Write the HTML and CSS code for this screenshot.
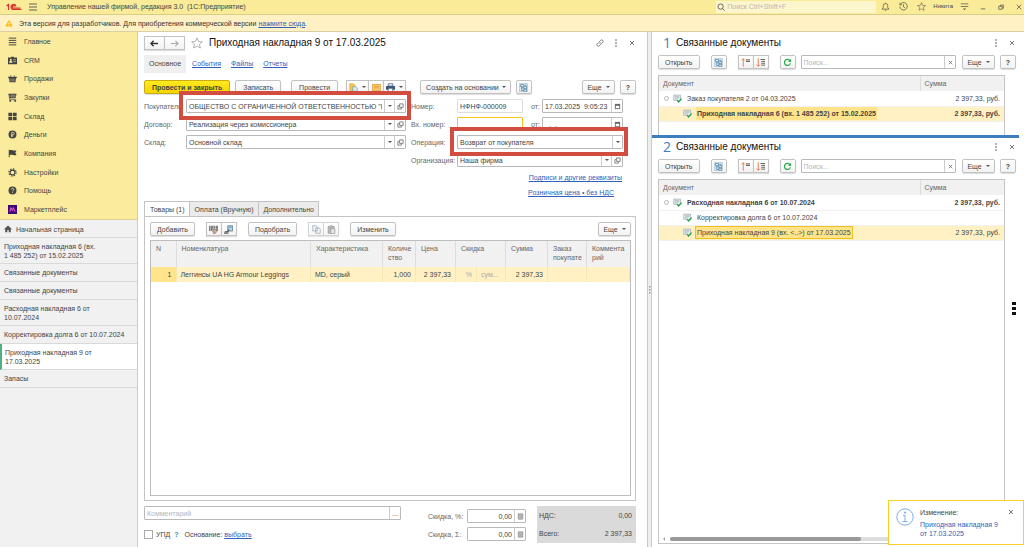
FILE: index.html
```html
<!DOCTYPE html>
<html lang="ru">
<head>
  <meta charset="UTF-8">
  <title>Управление нашей фирмой, редакция 3.0</title>
  <meta name="viewport" content="width=device-width, initial-scale=1.0">
  <link rel="stylesheet" href="styles.css">
</head>
<body>
  <!-- Shared icons -->
  <svg class="sprite" aria-hidden="true">
    <symbol id="i-star" viewBox="0 0 16 16"><path d="M8 1.2l2 4.8 5.2.4-4 3.3 1.3 5L8 12l-4.500 2.700 1.300-5-4-3.300L6 6z" fill="none" stroke="currentColor"/></symbol>
    <symbol id="i-kebab" viewBox="0 0 8 8"><circle cx="4" cy="1" r="0.800"/><circle cx="4" cy="4" r="0.800"/><circle cx="4" cy="7" r="0.800"/></symbol>
    <symbol id="i-close" viewBox="0 0 8 8"><path d="M2 2l4 4M6 2L2 6" stroke="currentColor" fill="none" stroke-width="0.800"/></symbol>
    <symbol id="i-open" viewBox="0 0 8 8"><path d="M3 1h4v4H3zM2.500 3H1v4h4V5.500" stroke="currentColor" fill="none" stroke-width="0.800"/></symbol>
    <symbol id="i-cal" viewBox="0 0 8 8"><path d="M1 1h6v6H1z" fill="#666"/><path d="M2 3.200h4v2.800H2z" fill="#fff"/></symbol>
    <symbol id="i-calc" viewBox="0 0 8 8"><path d="M1.500 1h5v6h-5z" fill="#ddd" stroke="#777" stroke-width="0.800"/><path d="M2 2.400h4M2.500 4.200h3M2.500 5.600h3" stroke="#777" stroke-width="0.700"/></symbol>
    <symbol id="i-struct" viewBox="0 0 12 12"><path d="M.5.500h11v11H.5z" fill="#dcebf5" stroke="#8bb0c9" stroke-width="0.700"/><path d="M2 2h4v2.500H2zM6.500 5h3.500v2.500H6.500zM6.500 8.500H10V11H6.500z" fill="#fff" stroke="#3f7396" stroke-width="0.900"/><path d="M3.500 4.500v5.500h3M3.500 6.500h3M7 3h2.500v2" stroke="#3f7396" fill="none" stroke-width="0.900"/></symbol>
    <symbol id="i-up" viewBox="0 0 12 12"><path d="M3 11.500V1M.8 3.200L3 1l2.200 2.200" stroke="#e8743c" fill="none" stroke-width="1.200"/><path d="M6.500 2.500H12M6.500 4.500H12" stroke="#555" stroke-width="1.300"/></symbol>
    <symbol id="i-down" viewBox="0 0 12 12"><path d="M3 .5V11M.8 8.800L3 11l2.200-2.200" stroke="#e8743c" fill="none" stroke-width="1.200"/><path d="M6 2h6M7 4.500h5M7 7h5M7 9.500h5" stroke="#555" stroke-width="1.200"/></symbol>
    <symbol id="i-refresh" viewBox="0 0 12 12"><path d="M9.800 7.200A4 4 0 1 1 9 3.300" stroke="#2ba84a" fill="none" stroke-width="1.700"/><path d="M10.800 1v4.200H6.800z" fill="#2ba84a"/></symbol>
    <symbol id="i-doc" viewBox="0 0 12 12"><path d="M1 1.500h9v7H1z" fill="#e9f1f5" stroke="#8a9aa5" stroke-width="0.800"/><path d="M2.500 3.500h6M2.500 5h6M2.500 6.500h4" stroke="#8a9aa5" stroke-width="0.700"/><path d="M5.500 8.500l2 2.200 4-4.500" stroke="#2ba84a" fill="none" stroke-width="1.800"/></symbol>
  </svg>

  <header class="topbar">
    <svg class="logo" viewBox="0 0 32 16" fill="none" stroke="#d8352a" stroke-width="2.400"><path d="M1 6l4-3v11M20 6.500A5 5 0 1 0 15 13h16M17.500 7A2.500 2.500 0 1 0 15 10.200h14"/></svg>
    <svg class="burger" viewBox="0 0 8 8"><path d="M0 1h8M0 4h8M0 7h8" stroke="#555" stroke-width="0.900"/></svg>
    <span class="app-name">Управление нашей фирмой, редакция 3.0 &nbsp;(1С:Предприятие)</span>
    <label class="search-top">
      <svg viewBox="0 0 10 10" fill="none" stroke="#444"><circle cx="4.500" cy="4.500" r="3.300"/><path d="M7 7l2.500 2.500"/></svg>
      <input type="search" placeholder="Поиск Ctrl+Shift+F" aria-label="Поиск">
    </label>
    <div class="top-icons">
      <svg viewBox="0 0 12 12" fill="none" stroke="currentColor"><path d="M1.500 9.500h9L9 7.500V5a3 3 0 0 0-6 0v2.500zM6 2V1M5 11h2"/></svg>
      <svg viewBox="0 0 12 12" fill="none" stroke="currentColor"><path d="M1.500 3.500A5 5 0 1 1 1 6M1.200 1v2.800H4M6 3v3.500l2 1"/></svg>
      <svg><use href="#i-star"/></svg>
      <span>Никита</span>
      <svg viewBox="0 0 12 12" fill="none" stroke="currentColor"><path d="M1 2.500h10M1 6h10"/><path d="M4 8.500h4L6 11z" fill="currentColor" stroke="none"/></svg>
    </div>
    <div class="win-icons">
      <svg viewBox="0 0 8 8" stroke="currentColor"><path d="M1 6.500h6"/></svg>
      <svg viewBox="0 0 8 8" stroke="currentColor" fill="none"><path d="M1 3h4.500v4H1zM3 3V1.500h4.500v4h-2"/></svg>
      <svg viewBox="0 0 8 8" stroke="currentColor"><path d="M1 1l6 6M7 1L1 7"/></svg>
    </div>
  </header>

  <div class="notice">
    <svg viewBox="0 0 10 10"><path d="M5 .8L9.700 9.500H.3z" fill="#fbbc12"/><path d="M5 4v3M5 7.600v1" stroke="#fff"/></svg>
    <span>Эта версия для разработчиков. Для приобретения коммерческой версии <a href="#">нажмите сюда</a>.</span>
  </div>

  <div class="workspace">
    <aside class="sidebar">
      <nav class="menu">
        <a href="#"><svg viewBox="0 0 12 12"><path d="M1 1.500h10M1 4.500h10M1 7.500h10M1 10.500h10" stroke="currentColor" stroke-width="1.300"/></svg>Главное</a>
        <a href="#"><svg viewBox="0 0 12 12"><path d="M0 2h4V1h4v1h4v9H0z"/><path d="M2 8.500c0-3 3.500-3 3.500 0zM7 5h3.500M7 7.500h3.500" fill="#faec9c" stroke="#faec9c" stroke-width="0.800"/><circle cx="3.700" cy="5" r="1.200" fill="#faec9c"/></svg>CRM</a>
        <a href="#"><svg viewBox="0 0 12 12"><path d="M1 5h10l-1 6H2zM0 3.500h12V5H0z"/><path d="M3 4l1-2.500M9 4L8 1.500" stroke="currentColor" stroke-width="0.800"/><path d="M2 7h8M2 9h8" stroke="#faec9c" stroke-width="0.500"/></svg>Продажи</a>
        <a href="#"><svg viewBox="0 0 12 12"><path d="M1 1h10.500L10 7H2.500z"/><path d="M1 1l1.500 8H11M5 1v6M8 1v6" stroke="currentColor" fill="none"/><path d="M5 1.500V7M8 1.500V7M2 4h9" stroke="#faec9c" stroke-width="0.500"/><circle cx="3" cy="10.500" r="1.300"/><circle cx="9.500" cy="10.500" r="1.300"/></svg>Закупки</a>
        <a href="#"><svg viewBox="0 0 12 12"><path d="M.5 1h5v4.500h-5zM6.500 1h5v4.500h-5zM.5 6.500h5V11h-5zM6.500 6.500h5V11h-5z"/></svg>Склад</a>
        <a href="#"><svg viewBox="0 0 12 12"><circle cx="6" cy="6" r="5.300"/><path d="M5 9.500V3h1.500a1.700 1.700 0 0 1 0 3.500H4M4 8h3" stroke="#faec9c" fill="none"/></svg>Деньги</a>
        <a href="#"><svg viewBox="0 0 12 12"><path d="M1 1h1.300v10H1zM2.300 1.500c3-1 4 1.500 9 .3l-1.500 3L11.300 8c-4 1-6-1.500-9 0z"/></svg>Компания</a>
        <a href="#"><svg viewBox="0 0 12 12" fill="none" stroke="currentColor"><circle cx="6" cy="6" r="3.200" stroke-width="1.500"/><circle cx="6" cy="6" r="4.800" stroke-width="1.600" stroke-dasharray="1.900 1.870"/></svg>Настройки</a>
        <a href="#"><svg viewBox="0 0 12 12"><circle cx="6" cy="6" r="5.300"/><path d="M4.300 4.800c0-2.300 3.500-2.300 3.500-.2C7.800 6 6 5.800 6 7.300M6 8.300v1.200" stroke="#faec9c" fill="none" stroke-width="1.100"/></svg>Помощь</a>
        <a href="#"><svg viewBox="0 0 12 12"><path d="M0 0h12v12H0z" fill="#3c0a78"/><path d="M2.500 9l1.200-5.500L6 7.500l1-4 2.500 5.500" stroke="#ef5fd0" fill="none" stroke-width="1.300"/></svg>Маркетплейс</a>
      </nav>
      <div class="windows">
        <a class="home" href="#"><svg viewBox="0 0 12 12"><path d="M6 .8L0 6.500h1.800V11H5V7.500h2V11h3.200V6.500H12z"/></svg>Начальная страница</a>
        <a href="#">Приходная накладная 6 (вх.<br>1 485 252) от 15.02.2025</a>
        <a href="#">Связанные документы</a>
        <a href="#">Связанные документы</a>
        <a href="#">Расходная накладная 6 от<br>10.07.2024</a>
        <a href="#">Корректировка долга 6 от 10.07.2024</a>
        <a class="active" href="#">Приходная накладная 9 от<br>17.03.2025</a>
        <a href="#">Запасы</a>
      </div>
    </aside>

    <main class="document">
      <div class="doc-head">
        <div class="btn-group">
          <button class="btn" aria-label="Назад"><svg viewBox="0 0 10 8"><path d="M4 1L1 4l3 3M1 4h8" stroke="#333" stroke-width="1.500" fill="none"/></svg></button>
          <button class="btn" aria-label="Вперед"><svg viewBox="0 0 10 8"><path d="M6 1l3 3-3 3M9 4H1" stroke="#aaa" stroke-width="1.200" fill="none"/></svg></button>
        </div>
        <svg class="fav"><use href="#i-star"/></svg>
        <h1>Приходная накладная 9 от 17.03.2025</h1>
        <div class="head-tools">
          <svg viewBox="0 0 10 10" fill="none" stroke="currentColor"><path d="M4.200 5.800a1.900 1.900 0 0 1 0-2.600l1.700-1.700a1.850 1.850 0 0 1 2.600 2.600L7.300 5.300M5.800 4.200a1.900 1.900 0 0 1 0 2.600L4.100 8.500a1.850 1.850 0 0 1-2.600-2.600L2.700 4.700" stroke-width="0.900"/></svg>
          <svg><use href="#i-kebab"/></svg>
          <svg><use href="#i-close"/></svg>
        </div>
      </div>

      <nav class="sections">
        <a class="current" href="#">Основное</a>
        <a href="#">События</a>
        <a href="#">Файлы</a>
        <a href="#">Отчеты</a>
      </nav>

      <div class="commands">
        <button class="btn primary">Провести и закрыть</button>
        <button class="btn">Записать</button>
        <button class="btn post">Провести</button>
        <div class="btn-group icons">
          <button class="btn" aria-label="Файлы"><svg viewBox="0 0 12 12"><path d="M1 1h5l2 2v7H1z" fill="#f4c64e" stroke="#cf9a22" stroke-width="0.700"/><path d="M5 5h4l2 2v4H5z" fill="#dcebf5" stroke="#5a8dad" stroke-width="0.800"/></svg><i class="caret"></i></button>
          <button class="btn" aria-label="Письмо"><svg viewBox="0 0 12 12"><path d="M.5 2h11v8.500H.5z" fill="#f7cf72" stroke="#d9962b"/><path d="M2.500 4.500h7M2.500 6.500h7" stroke="#d9962b"/></svg></button>
          <button class="btn" aria-label="Печать"><svg viewBox="0 0 12 12"><path d="M0 4h12v5H0z" fill="#3d5a75"/><path d="M3 1h6v3H3zM3 7h6v4.500H3z" fill="#fff" stroke="#3d5a75"/></svg><i class="caret"></i></button>
        </div>
        <button class="btn base">Создать на основании<i class="caret"></i></button>
        <button class="btn square" aria-label="Структура подчиненности"><svg><use href="#i-struct"/></svg></button>
        <button class="btn more">Еще<i class="caret"></i></button>
        <button class="btn square help">?</button>
      </div>

      <form class="props">
        <div class="props-left">
          <div class="field">
            <label for="buyer">Покупатель:</label>
            <div class="combo marked"><select id="buyer"><option>ОБЩЕСТВО С ОГРАНИЧЕННОЙ ОТВЕТСТВЕННОСТЬЮ "Б</option></select><span class="drop"><i class="caret"></i></span><button type="button" aria-label="Открыть"><svg><use href="#i-open"/></svg></button></div>
          </div>
          <div class="field">
            <label for="contract">Договор:</label>
            <div class="combo"><select id="contract"><option>Реализация через комиссионера</option></select><span class="drop"><i class="caret"></i></span><button type="button" aria-label="Открыть"><svg><use href="#i-open"/></svg></button></div>
          </div>
          <div class="field">
            <label for="store">Склад:</label>
            <div class="combo"><select id="store"><option>Основной склад</option></select><span class="drop"><i class="caret"></i></span><button type="button" aria-label="Открыть"><svg><use href="#i-open"/></svg></button></div>
          </div>
        </div>
        <div class="props-right">
          <div class="field">
            <label for="num">Номер:</label>
            <div class="combo number readonly"><input id="num" type="text" value="НФНФ-000009" readonly></div>
            <label class="from" for="date">от:</label>
            <div class="combo"><input id="date" type="text" value="17.03.2025  9:05:23"><button type="button" aria-label="Календарь"><svg><use href="#i-cal"/></svg></button></div>
          </div>
          <div class="field">
            <label for="innum">Вх. номер:</label>
            <div class="combo number focused"><input id="innum" type="text"></div>
            <label class="from" for="indate">от:</label>
            <div class="combo"><input id="indate" type="text" value="  .  ."><button type="button" aria-label="Календарь"><svg><use href="#i-cal"/></svg></button></div>
          </div>
          <div class="field">
            <label for="oper">Операция:</label>
            <div class="combo marked"><select id="oper"><option>Возврат от покупателя</option></select><span class="drop"><i class="caret"></i></span></div>
          </div>
          <div class="field">
            <label for="org">Организация:</label>
            <div class="combo"><select id="org"><option>Наша фирма</option></select><span class="drop"><i class="caret"></i></span><button type="button" aria-label="Открыть"><svg><use href="#i-open"/></svg></button></div>
          </div>
          <div class="extra-links">
            <a href="#">Подписи и другие реквизиты</a>
            <a class="price" href="#">Розничная цена • без НДС</a>
          </div>
        </div>
      </form>

      <div class="tabs" role="tablist">
        <button class="tab selected" role="tab">Товары (1)</button>
        <button class="tab" role="tab">Оплата (Вручную)</button>
        <button class="tab" role="tab">Дополнительно</button>
      </div>
      <section class="tab-body">
        <div class="toolbar">
          <button class="btn">Добавить</button>
          <div class="btn-group">
            <button class="btn" aria-label="Штрихкод"><svg viewBox="0 0 12 12"><path d="M1 1v7M3 1v7M5 1v5M7 1v4M9.500 1v4M11 1v7" stroke="#444" stroke-width="1.200"/><path d="M5 6h5v3l-2 2.500H6.500L5 9z" fill="#d9a98a" stroke="#555" stroke-width="0.700"/></svg></button>
            <button class="btn" aria-label="Весы"><svg viewBox="0 0 12 12"><path d="M5 1h6.500v7H5z" fill="#b9d8ea" stroke="#46708c"/><path d="M6.500 3h3.500" stroke="#46708c"/><path d="M1 9h4l2-3" stroke="#444" stroke-width="1.500" fill="none"/><path d="M0 10h6v1.500H0z" fill="#444"/></svg></button>
          </div>
          <button class="btn">Подобрать</button>
          <div class="btn-group dim">
            <button class="btn" aria-label="Копировать"><svg viewBox="0 0 12 12"><path d="M1 1h4.500L7 2.500V8H1zM5 4h4.500L11 5.500V11H5z" fill="#eef4f8" stroke="#68869c"/></svg></button>
            <button class="btn" aria-label="Вставить"><svg viewBox="0 0 12 12" stroke="#777"><path d="M1.500 2h8v9h-8z" fill="#999"/><path d="M4 1h3v2H4z" fill="#ccc"/><path d="M5 5h5.500v6.500H5z" fill="#ddd"/></svg></button>
          </div>
          <button class="btn">Изменить</button>
          <button class="btn more">Еще<i class="caret"></i></button>
        </div>
        <div class="grid-box">
          <table class="goods">
            <colgroup><col class="c-n"><col><col class="c-char"><col class="c-qty"><col class="c-price"><col class="c-pct"><col class="c-disc"><col class="c-sum"><col class="c-order"><col class="c-note"></colgroup>
            <thead>
              <tr><th>N</th><th>Номенклатура</th><th>Характеристика</th><th>Количе<br>ство</th><th>Цена</th><th colspan="2">Скидка</th><th>Сумма</th><th>Заказ<br>покупате</th><th>Коммента<br>рий</th></tr>
            </thead>
            <tbody>
              <tr><td class="num cell-current">1</td><td>Леггинсы UA HG Armour Leggings</td><td>MD, серый</td><td class="num">1,000</td><td class="num">2 397,33</td><td class="num hint">%</td><td class="hint">сум...</td><td class="num">2 397,33</td><td></td><td></td></tr>
            </tbody>
          </table>
        </div>
      </section>

      <footer class="doc-foot">
        <div class="foot-left">
          <div class="combo comment"><input type="text" placeholder="Комментарий" aria-label="Комментарий"><button type="button">...</button></div>
          <div class="basis">
            <input type="checkbox" id="upd"><label for="upd">УПД</label><b class="q">?</b><span>Основание: <a href="#">выбрать</a></span>
          </div>
        </div>
        <div class="discounts">
          <div class="field"><label for="dp">Скидка, %:</label><div class="combo"><input id="dp" type="text" value="0,00"><button type="button" aria-label="Калькулятор"><svg><use href="#i-calc"/></svg></button></div></div>
          <div class="field"><label for="ds">Скидка, Σ:</label><div class="combo"><input id="ds" type="text" value="0,00"><button type="button" aria-label="Калькулятор"><svg><use href="#i-calc"/></svg></button></div></div>
        </div>
        <dl class="totals">
          <div><dt>НДС:</dt><dd>0,00</dd></div>
          <div><dt>Всего:</dt><dd>2 397,33</dd></div>
        </dl>
      </footer>
    </main>

    <div class="splitter"><svg viewBox="0 0 2 8" fill="#888"><path d="M0 0h1.500v1.500H0zM0 3h1.500v1.500H0zM0 6h1.500v1.500H0z"/></svg></div>

    <div class="related">
      <section class="rel-panel first">
        <div class="rel-head">
          <span class="mark">1</span>
          <h2>Связанные документы</h2>
          <svg><use href="#i-kebab"/></svg>
          <svg><use href="#i-close"/></svg>
        </div>
        <div class="rel-tools">
          <button class="btn">Открыть</button>
          <button class="btn square" aria-label="Структура"><svg><use href="#i-struct"/></svg></button>
          <div class="btn-group"><button class="btn" aria-label="Вверх"><svg><use href="#i-up"/></svg></button><button class="btn" aria-label="Вниз"><svg><use href="#i-down"/></svg></button></div>
          <button class="btn square" aria-label="Обновить"><svg><use href="#i-refresh"/></svg></button>
          <div class="combo find"><input type="text" placeholder="Поиск..." aria-label="Поиск"><button type="button" aria-label="Очистить"><svg><use href="#i-close"/></svg></button></div>
          <button class="btn more">Еще<i class="caret"></i></button>
          <button class="btn square help">?</button>
        </div>
        <div class="rel-box">
          <table>
            <thead><tr><th>Документ</th><th class="c-amount">Сумма</th></tr></thead>
            <tbody>
              <tr><td><div class="node"><i class="toggle"></i><svg><use href="#i-doc"/></svg><span>Заказ покупателя 2 от 04.03.2025</span></div></td><td class="num">2 397,33, руб.</td></tr>
              <tr class="strong current"><td><div class="node child"><svg><use href="#i-doc"/></svg><span>Приходная накладная 6 (вх. 1 485 252) от 15.02.2025</span></div></td><td class="num">2 397,33, руб.</td></tr>
            </tbody>
          </table>
        </div>
      </section>

      <section class="rel-panel second">
        <div class="rel-head">
          <span class="mark">2</span>
          <h2>Связанные документы</h2>
          <svg><use href="#i-kebab"/></svg>
          <svg><use href="#i-close"/></svg>
        </div>
        <div class="rel-tools">
          <button class="btn">Открыть</button>
          <button class="btn square" aria-label="Структура"><svg><use href="#i-struct"/></svg></button>
          <div class="btn-group"><button class="btn" aria-label="Вверх"><svg><use href="#i-up"/></svg></button><button class="btn" aria-label="Вниз"><svg><use href="#i-down"/></svg></button></div>
          <button class="btn square" aria-label="Обновить"><svg><use href="#i-refresh"/></svg></button>
          <div class="combo find"><input type="text" placeholder="Поиск..." aria-label="Поиск"><button type="button" aria-label="Очистить"><svg><use href="#i-close"/></svg></button></div>
          <button class="btn more">Еще<i class="caret"></i></button>
          <button class="btn square help">?</button>
        </div>
        <div class="rel-box">
          <table>
            <thead><tr><th>Документ</th><th class="c-amount">Сумма</th></tr></thead>
            <tbody>
              <tr class="strong"><td><div class="node"><i class="toggle"></i><svg><use href="#i-doc"/></svg><span>Расходная накладная 6 от 10.07.2024</span></div></td><td class="num">2 397,33, руб.</td></tr>
              <tr><td><div class="node child"><svg><use href="#i-doc"/></svg><span>Корректировка долга 6 от 10.07.2024</span></div></td><td></td></tr>
              <tr class="current focus"><td><div class="node child"><svg><use href="#i-doc"/></svg><span>Приходная накладная 9 (вх. &lt;..&gt;) от 17.03.2025</span></div></td><td class="num">2 397,33, руб.</td></tr>
            </tbody>
          </table>
          <div class="hscroll"><i class="arrow"></i><div class="track"><div class="thumb"></div></div></div>
        </div>
      </section>
      <svg class="side-dots" viewBox="0 0 4 14"><path d="M0 0h4v3H0zM0 5h4v3H0zM0 10h4v3H0z"/></svg>
    </div>
  </div>

  <div class="toast">
    <svg class="info" viewBox="0 0 18 18" fill="none" stroke="#7db0e6"><circle cx="9" cy="9" r="8.200"/><path d="M7 7.500h2v6M6.500 13.500h5M8.500 4h1.200v1.200H8.500z"/></svg>
    <div class="toast-text">
      <p>Изменение:</p>
      <a href="#">Приходная накладная 9<br>от 17.03.2025</a>
    </div>
    <svg class="x"><use href="#i-close"/></svg>
  </div>
</body>
</html>
```

FILE: styles.css
```css
/* Base */
* {
  box-sizing: border-box;
  margin: 0;
  padding: 0;
}
body {
  display: flex;
  flex-direction: column;
  height: 100vh;
  overflow: hidden;
  font-family: "Liberation Sans", Arial, sans-serif;
  font-size: 7px;
  line-height: 9px;
  color: #444;
  background: #fff;
}
button, input, select {
  font: inherit;
  color: inherit;
  background: none;
  border: 0;
  outline: 0;
  border-radius: 0;
  min-width: 0;
}
select {
  appearance: none;
}
input[type="search"] {
  appearance: none;
}
input::placeholder {
  color: #b5b5b5;
  opacity: 1;
}
svg {
  width: 8px;
  height: 8px;
  flex: none;
  fill: currentColor;
  color: #555;
}
svg[fill="none"] {
  fill: none;
}
a {
  color: #2f62b8;
}
table {
  border-collapse: collapse;
  width: 100%;
}
.sprite {
  display: none;
}
.caret {
  flex: none;
  border: 2px solid transparent;
  border-top-color: #555;
  border-bottom: 0;
}

/* Top bar */
.topbar {
  display: flex;
  align-items: center;
  height: 15px;
  padding: 0 2px 1px 6px;
  background: #faeb98;
  border-bottom: 1px solid #d8cd86;
}
.logo {
  width: 16px;
}
.burger {
  margin: 0 10px 0 7px;
}
.app-name {
  flex: 1;
}
.search-top {
  display: flex;
  align-items: center;
  gap: 2px;
  width: 160px;
  height: 12px;
  padding: 0 1px;
  background: #fdf5cb;
}
.search-top input {
  flex: 1;
}
.top-icons, .win-icons {
  display: flex;
  align-items: center;
}
.top-icons {
  gap: 9px;
  margin: 0 11px 0 5px;
  font-size: 6px;
}
.top-icons svg {
  width: 9px;
  height: 9px;
}
.top-icons span {
  margin: 0 -2px;
}
.win-icons {
  gap: 12px;
}
.win-icons svg {
  width: 6px;
  height: 6px;
}

/* Developer notice */
.notice {
  display: flex;
  align-items: center;
  gap: 6px;
  height: 17px;
  padding-left: 5px;
  background: #fff1c3;
  border-bottom: 1px solid #d9cfa4;
  color: #333;
}

/* Layout */
.workspace {
  display: flex;
  flex: 1;
  min-height: 0;
}
.sidebar {
  flex: 0 0 138px;
  background: #f1f1f1;
  border-right: 1px solid #d9cf96;
}
.menu {
  display: flex;
  flex-direction: column;
  height: 188px;
  background: #faec9c;
  border-bottom: 1px solid #d9cf96;
}
.menu a {
  display: flex;
  flex: 1;
  align-items: center;
  gap: 7px;
  padding-left: 8px;
  color: #444;
  text-decoration: none;
}
.menu svg {
  width: 9px;
  height: 9px;
  color: #444;
}
.windows a {
  display: block;
  min-height: 18px;
  padding: 4px 4px 3px;
  border-bottom: 1px solid #d9d9d9;
  color: #444;
  text-decoration: none;
}
.windows .home {
  display: flex;
  align-items: center;
  gap: 4px;
}
.windows .active {
  padding-left: 3px;
  background: #fff;
  border-left: 2px solid #4eb183;
}

/* Buttons */
.btn {
  display: inline-flex;
  align-items: center;
  justify-content: center;
  gap: 4px;
  flex: none;
  height: 14px;
  padding: 0 7px;
  border: 1px solid #c2c2c2;
  border-radius: 2px;
  background: linear-gradient(#fff, #f2f2f2);
  box-shadow: 0 1px 1px #ddd;
  white-space: nowrap;
}
.btn svg {
  width: 9px;
  height: 9px;
}
.square {
  width: 16px;
  padding: 0;
}
.help {
  font-weight: bold;
}
.more {
  width: 33px;
  padding: 0;
}
.primary {
  font-weight: bold;
  background: linear-gradient(#ffea1f, #f5d400);
  border-color: #c9ab12;
}
.btn-group {
  display: flex;
  flex: none;
}
.btn-group .btn {
  min-width: 16px;
  padding: 0 2px;
  border-radius: 0;
}
.btn-group .btn + .btn {
  margin-left: -1px;
}

/* Document form */
.document {
  display: flex;
  flex-direction: column;
  flex: 1;
  min-width: 0;
  padding: 4px 11px 2px 6px;
}
.doc-head {
  display: flex;
  align-items: center;
  height: 14px;
}
.doc-head .btn {
  width: 21px;
}
.fav {
  width: 12px;
  height: 12px;
  margin: 0 6px;
  color: #999;
}
h1, h2 {
  font-size: 10px;
  font-weight: normal;
  line-height: 14px;
  color: #111;
}
.doc-head h1 {
  flex: 1;
}
.head-tools {
  display: flex;
  gap: 8px;
}
.sections {
  display: flex;
  gap: 10px;
  margin: 5px 0 7px;
  line-height: 18px;
}
.sections .current {
  padding: 0 5px;
  margin-right: -4px;
  background: #efefef;
  color: #444;
  text-decoration: none;
}
.commands {
  display: flex;
  gap: 5px;
  margin-bottom: 5px;
}
.post {
  margin-left: 5px;
}
.icons {
  margin: 0 9px 0 3px;
}
.commands .base {
  gap: 3px;
  padding: 0 4px 0 5px;
}
.commands .more, .toolbar .more {
  margin-left: auto;
}

/* Fields */
.props {
  display: flex;
  align-items: flex-start;
  gap: 5px;
  padding-right: 13px;
}
.props-left {
  flex: 1;
}
.props-right {
  flex: 0 0 212px;
}
.field {
  display: flex;
  align-items: center;
  height: 18px;
  padding-bottom: 4px;
}
.field label {
  flex: none;
  color: #666;
  white-space: nowrap;
}
.props-left label {
  width: 42px;
}
.props-right label {
  width: 46px;
}
.props-right .from {
  width: 19px;
  padding-left: 8px;
}
.combo {
  position: relative;
  display: flex;
  flex: 1;
  min-width: 0;
  height: 14px;
  border: 1px solid #b9b9b9;
  border-radius: 1px;
  background: #fff;
}
.combo input, .combo select {
  flex: 1;
  width: 0;
  padding: 0 2px;
  white-space: pre;
}
.combo button, .drop {
  display: flex;
  align-items: center;
  justify-content: center;
  flex: 0 0 11px;
  border-left: 1px solid #ccc;
}
.combo .drop {
  flex-basis: 10px;
}
.combo svg {
  width: 7px;
  height: 7px;
}
.number {
  flex: 0 0 66px;
}
.readonly {
  border-color: #ddd;
}
.focused {
  border-color: #f5c518;
}
/* Red frame over the fields that need attention */
.marked::after {
  content: "";
  position: absolute;
  inset: -9px -6px -8px -8px;
  z-index: 2;
  border: 4px solid #d24d40;
  pointer-events: none;
}
.extra-links {
  display: flex;
  flex-direction: column;
  align-items: flex-end;
  gap: 6px;
  padding: 2px 1px 0 0;
}
.price {
  margin-right: 8px;
}

/* Tabs */
.tabs {
  display: flex;
  margin-top: 4px;
}
.tab {
  height: 15px;
  padding: 0 4px 0 5px;
  border: 1px solid #c4c4c4;
  border-left-width: 0;
  border-bottom: 0;
  background: #ebebeb;
}
.tab.selected {
  border-left-width: 1px;
  background: #fff;
  margin-bottom: -1px;
  z-index: 1;
}
.tab-body {
  display: flex;
  flex-direction: column;
  flex: 1;
  padding: 5px 4px 4px 5px;
  border: 1px solid #c4c4c4;
}
.toolbar {
  display: flex;
  gap: 11px;
  margin-bottom: 4px;
}
.toolbar .btn, .rel-tools .btn {
  padding: 0 6px;
}
.toolbar .btn-group .btn, .rel-tools .btn-group .btn, .rel-tools .square {
  padding: 0 2px;
}
.toolbar .more, .rel-tools .more {
  padding: 0;
}
.dim {
  opacity: 0.7;
}
.grid-box {
  flex: 1;
  border: 1px solid #bdbdbd;
}
.goods {
  table-layout: fixed;
}
th {
  font-weight: normal;
  text-align: left;
  color: #666;
  background: #f1f1f1;
  border-right: 1px solid #ddd;
}
th:last-child {
  border-right: 0;
}
.goods th {
  height: 26px;
  padding: 3px 0 0 5px;
  vertical-align: top;
}
.goods td {
  height: 15px;
  padding: 0 4px;
  background: #fff1c3;
  border-right: 1px solid #f7e7b2;
  white-space: nowrap;
}
.c-n { width: 25px; }
.c-char { width: 72px; }
.c-qty { width: 33px; }
.c-price { width: 40px; }
.c-pct { width: 21px; }
.c-disc { width: 29px; }
.c-sum { width: 42px; }
.c-order { width: 39px; }
.c-note { width: 43px; }
.num {
  text-align: right;
}
.goods .cell-current {
  background: #ffe48c;
}
.goods .hint {
  color: #aaa;
}

/* Document footer */
.doc-foot {
  display: flex;
  align-items: flex-start;
  justify-content: space-between;
  padding-top: 5px;
}
.foot-left {
  flex: 0 0 257px;
}
.comment {
  margin-bottom: 10px;
}
.basis {
  display: flex;
  align-items: center;
}
.basis input {
  appearance: none;
  width: 9px;
  height: 9px;
  margin-right: 3px;
  border: 1px solid #aaa;
}
.q {
  margin: 0 6px 0 4px;
  color: #2c8fd0;
}
.discounts {
  flex: 0 0 98px;
  margin-left: 16px;
  padding-top: 3px;
}
.discounts label {
  width: 39px;
}
.discounts input {
  text-align: right;
}
.totals {
  flex: 0 0 99px;
  padding: 1px 4px 0 2px;
  background: #dadada;
}
.totals div {
  display: flex;
  justify-content: space-between;
  line-height: 18px;
}

/* Splitter */
.splitter {
  display: flex;
  align-items: center;
  justify-content: center;
  flex: 0 0 5px;
  border: 1px solid #c8c8c8;
  border-width: 0 1px;
  background: #eee;
}
.splitter svg {
  width: 2px;
  color: #999;
}

/* Related documents */
.related {
  position: relative;
  display: flex;
  flex-direction: column;
  flex: 0 0 372px;
}
.rel-panel {
  display: flex;
  flex-direction: column;
  padding: 4px 8px 0 6px;
}
.first {
  height: 104px;
}
.second {
  flex: 1;
  padding-bottom: 3px;
  position: relative;
}
.second::before {
  content: "";
  position: absolute;
  inset: -1px 5px auto 0;
  height: 3px;
  background: #3e7ebf;
}
.rel-head {
  display: flex;
  align-items: center;
  height: 14px;
}
.rel-head h2 {
  flex: 1;
}
.rel-head svg {
  margin-left: 8px;
}
.mark {
  width: 18px;
  padding-left: 5px;
  font-family: "Open Sans", sans-serif;
  font-size: 14px;
  line-height: 14px;
  color: #3e7ebf;
}
.rel-tools {
  display: flex;
  gap: 11px;
  margin: 5px 0 6px;
}
.rel-tools .find {
  height: 14px;
  margin: 0 -5px 0 -6px;
}
.rel-tools .help {
  margin-left: -6px;
}
.rel-box {
  display: flex;
  flex-direction: column;
  justify-content: space-between;
  flex: 1;
  margin-right: 11px;
  border: 1px solid #c4c4c4;
}
.first .rel-box {
  border-bottom: 0;
}
.rel-box th {
  height: 15px;
  padding: 0 4px;
}
.rel-box td {
  height: 15px;
  padding: 0 4px;
  border-bottom: 1px solid #f1f1f1;
}
.c-amount {
  width: 84px;
}
.node {
  display: flex;
  align-items: center;
  gap: 4px;
  padding-left: 1px;
}
.node svg {
  width: 9px;
  height: 9px;
}
.node span {
  padding: 2px 1px;
}
.child {
  padding-left: 20px;
}
.toggle {
  width: 5px;
  height: 5px;
  border: 1px solid #bbb;
  border-radius: 50%;
}
.strong {
  font-weight: bold;
}
.current td {
  background: #fff1c3;
}
.current .node span {
  background: #ffe48c;
}
.focus .node span {
  padding: 1px;
  outline: 1px solid #f0c020;
}
.hscroll {
  display: flex;
  align-items: center;
  height: 8px;
  padding: 0 4px;
}
.arrow {
  border: 2px solid transparent;
  border-left: 0;
  border-right-color: #aaa;
}
.track {
  flex: 1;
  height: 4px;
  margin-left: 5px;
  background: #ddd;
  border-radius: 2px;
}
.thumb {
  width: 58%;
  height: 4px;
  background: #999;
  border-radius: 2px;
}
.side-dots {
  position: absolute;
  top: 270px;
  right: 8px;
  width: 4px;
  height: 14px;
  color: #111;
}

/* Notification */
.toast {
  position: absolute;
  right: 0;
  bottom: 2px;
  z-index: 3;
  display: flex;
  gap: 6px;
  width: 136px;
  padding: 7px 8px 6px 7px;
  border: 1px solid #fbcf2b;
  background: #fff;
}
.info {
  width: 18px;
  height: 18px;
}
.toast-text {
  flex: 1;
}
.toast-text p {
  margin-bottom: 3px;
}
.toast a {
  text-decoration: none;
}
```
